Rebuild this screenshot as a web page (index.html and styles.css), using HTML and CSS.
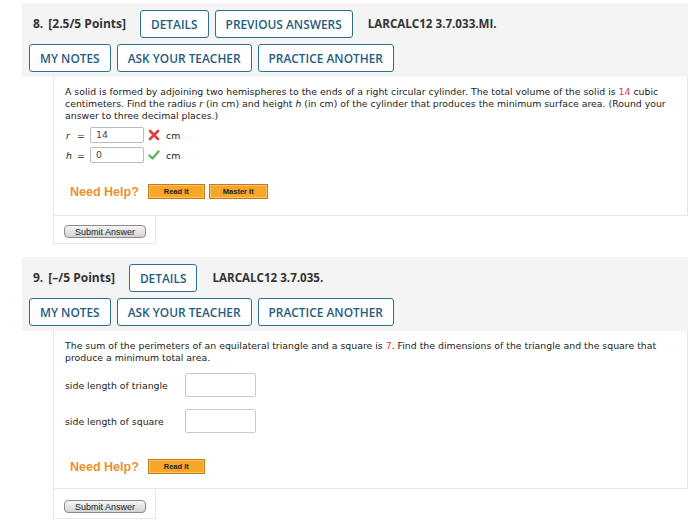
FILE: index.html
```html
<!DOCTYPE html>
<html>
<head>
<meta charset="utf-8">
<link rel="stylesheet" href="styles.css">
</head>
<body>
<div class="question q8">
  <div class="qhead">
    <div class="hrow">
      <span class="qlabel"><span class="qnum">8.</span>[2.5/5 Points]</span>
      <span class="btn">DETAILS</span>
      <span class="btn">PREVIOUS ANSWERS</span>
      <span class="qcode">LARCALC12 3.7.033.MI.</span>
    </div>
    <div class="hrow">
      <span class="btn">MY NOTES</span>
      <span class="btn">ASK YOUR TEACHER</span>
      <span class="btn">PRACTICE ANOTHER</span>
    </div>
  </div>
  <div class="qbody">
    <p class="qtext">A solid is formed by adjoining two hemispheres to the ends of a right circular cylinder. The total volume of the solid is <span class="red">14</span> cubic centimeters. Find the radius <i>r</i> (in cm) and height <i>h</i> (in cm) of the cylinder that produces the minimum surface area. (Round your answer to three decimal places.)</p>
    <div class="ansrow">
      <span class="var"><i>r</i></span><span class="eq">=</span>
      <span class="inp">14</span>
      <svg class="mark" width="12" height="12" viewBox="0 0 12 12"><path d="M2 2 L10 10 M10 2 L2 10" stroke="#e0393e" stroke-width="2.6" stroke-linecap="round"/></svg>
      <span class="unit">cm</span>
    </div>
    <div class="ansrow">
      <span class="var"><i>h</i></span><span class="eq">=</span>
      <span class="inp">0</span>
      <svg class="mark" width="12" height="12" viewBox="0 0 12 12"><path d="M1.5 6.5 L4.5 9.5 L10.5 2.5" fill="none" stroke="#5cb85c" stroke-width="2.4" stroke-linecap="round" stroke-linejoin="round"/></svg>
      <span class="unit">cm</span>
    </div>
    <div class="help">
      <span class="needhelp">Need Help?</span>
      <span class="hbtn">Read It</span>
      <span class="hbtn">Master It</span>
    </div>
  </div>
  <div class="submitbox"><span class="submit">Submit Answer</span></div>
</div>

<div class="question q9">
  <div class="qhead">
    <div class="hrow">
      <span class="qlabel"><span class="qnum">9.</span>[&ndash;/5 Points]</span>
      <span class="btn">DETAILS</span>
      <span class="qcode">LARCALC12 3.7.035.</span>
    </div>
    <div class="hrow">
      <span class="btn">MY NOTES</span>
      <span class="btn">ASK YOUR TEACHER</span>
      <span class="btn">PRACTICE ANOTHER</span>
    </div>
  </div>
  <div class="qbody">
    <p class="qtext">The sum of the perimeters of an equilateral triangle and a square is <span class="red">7</span>. Find the dimensions of the triangle and the square that produce a minimum total area.</p>
    <div class="siderow">
      <span class="sidelabel">side length of triangle</span>
      <span class="bigbox"></span>
    </div>
    <div class="siderow">
      <span class="sidelabel">side length of square</span>
      <span class="bigbox"></span>
    </div>
    <div class="help">
      <span class="needhelp">Need Help?</span>
      <span class="hbtn">Read It</span>
    </div>
  </div>
  <div class="submitbox"><span class="submit">Submit Answer</span></div>
</div>
</body>
</html>
```
FILE: styles.css
```css
body {
  margin: 0;
  background: #fff;
  font-family: "DejaVu Sans", Verdana, sans-serif;
  color: #222;
}
.question {
  margin-left: 22px;
  width: 666px;
}
.q8 { padding-top: 3px; }
.q9 { margin-top: 13px; }
.qhead {
  background: #f4f4f4;
  padding: 7px 0 6px 7px;
  display: flex;
  flex-direction: column;
  gap: 7px;
}
.hrow {
  display: flex;
  align-items: center;
  gap: 6px;
  height: 27px;
}
.qlabel {
  font-family: "Open Sans", sans-serif;
  font-weight: 700;
  font-size: 12px;
  color: #333;
  padding-left: 4px;
  margin-right: 8px;
  white-space: nowrap;
}
.qnum { margin-right: 5px; }
.qcode {
  font-family: "Open Sans", sans-serif;
  font-weight: 700;
  font-size: 11.6px;
  color: #333;
  margin-left: 9px;
}
.btn {
  box-sizing: border-box;
  height: 28px;
  display: flex;
  align-items: center;
  padding: 0 10px;
  border: 1.5px solid #2f6e92;
  border-radius: 3px;
  background: #fff;
  font-family: "Open Sans", sans-serif;
  font-weight: 600;
  font-size: 11.9px;
  color: #245c80;
}
.qbody {
  margin-left: 31px;
  border-left: 1px solid #e8e8e8;
  border-right: 1px solid #e6e6e6;
  border-bottom: 1px solid #e6e6e6;
  padding: 9px 12px 0 11px;
}
.q8 .qbody { height: 129px; }
.q9 .qbody { height: 148px; }
.qtext {
  margin: 0;
  font-size: 9.35px;
  line-height: 12px;
  color: #222;
}
.red { color: #e0393e; }
.ansrow {
  display: flex;
  align-items: center;
  height: 16px;
  margin-top: 4px;
  font-size: 9.35px;
}
.qtext + .ansrow { margin-top: 5px; }
.var { width: 11px; padding-left: 1px; }
.eq { width: 13px; }
.inp {
  box-sizing: border-box;
  width: 54px;
  height: 16px;
  border: 1px solid #bbb;
  border-radius: 2px;
  padding: 0 5px;
  line-height: 14px;
  font-size: 9.35px;
  color: #444;
}
.mark { margin-left: 4px; }
.unit { margin-left: 6px; }
.help {
  display: flex;
  align-items: center;
  gap: 4px;
  margin-top: 21px;
  padding-left: 5px;
}
.needhelp {
  font-family: "Liberation Sans", Arial, sans-serif;
  font-weight: 700;
  font-size: 12.5px;
  color: #e8922d;
  margin-right: 5px;
}
.hbtn {
  box-sizing: border-box;
  width: 57px;
  height: 15px;
  display: flex;
  align-items: center;
  justify-content: center;
  background: #f6a72a;
  border: 1px solid #c47a17;
  box-shadow: inset 0 0 0 1px #fbc364;
  font-family: "Liberation Sans", Arial, sans-serif;
  font-weight: 700;
  font-size: 7.5px;
  color: #222;
}
.hbtn + .hbtn { width: 59px; }
.siderow {
  display: flex;
  align-items: center;
  margin-top: 12px;
}
.qtext + .siderow { margin-top: 9px; }
.sidelabel {
  width: 120px;
  font-size: 9.35px;
}
.bigbox {
  box-sizing: border-box;
  width: 71px;
  height: 24px;
  border: 1px solid #c8c8c8;
  border-radius: 2px;
}
.q9 .help { margin-top: 26px; }
.submitbox {
  box-sizing: border-box;
  display: flex;
  align-items: flex-start;
  margin-left: 31px;
  width: 103px;
  height: 28px;
  border: 1px solid #e8e8e8;
  border-top: none;
  padding: 9px 0 0 10px;
}
.q9 .submitbox { height: 30px; padding-top: 11px; }
.submit {
  box-sizing: border-box;
  display: flex;
  align-items: center;
  justify-content: center;
  width: 82px;
  height: 13px;
  border: 1px solid #8a8a8a;
  border-radius: 4px;
  background: linear-gradient(#f6f6f6, #d2d2d2);
  font-family: "Liberation Sans", Arial, sans-serif;
  font-size: 9px;
  color: #222;
}
```
